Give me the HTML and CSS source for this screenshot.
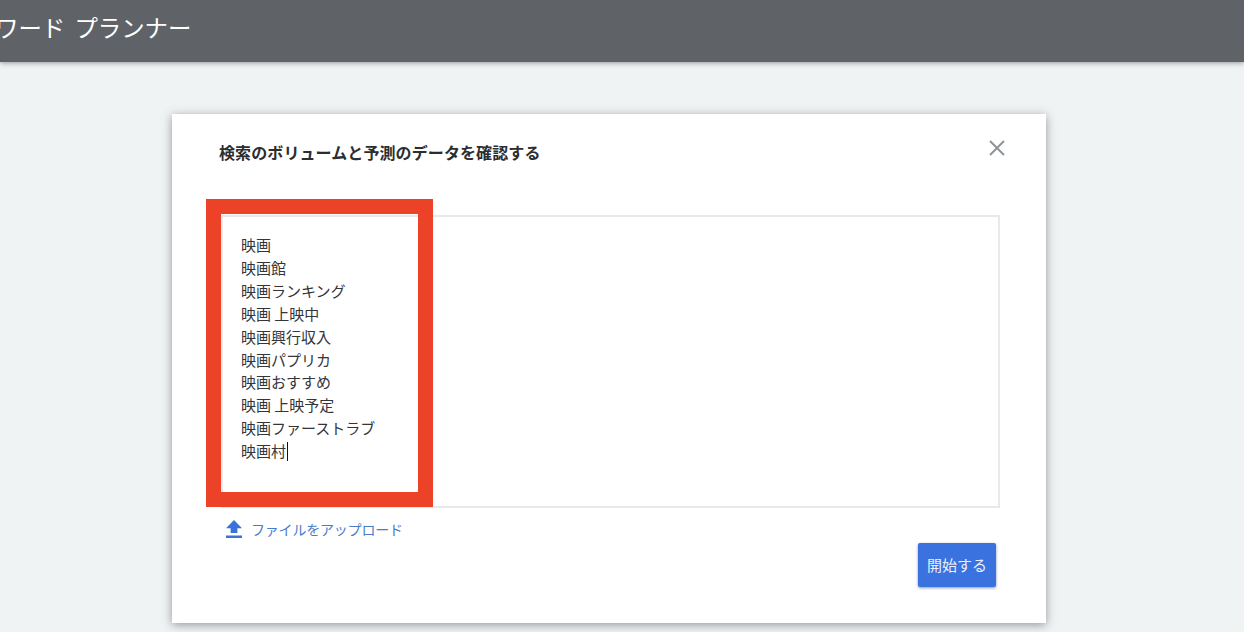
FILE: index.html
```html
<!DOCTYPE html>
<html lang="ja">
<head>
<meta charset="utf-8">
<title>キーワード プランナー</title>
<link rel="stylesheet" href="styles.css">
</head>
<body>
<header class="topbar"><h1 class="topbar-title">ワード プランナー</h1></header>
<main class="stage">
  <section class="dialog">
    <div class="dialog-head">
      <h2 class="dialog-title">検索のボリュームと予測のデータを確認する</h2>
      <button class="close" type="button" aria-label="閉じる">
        <svg width="16" height="16" viewBox="0 0 16 16"><path d="M1 1l14 14M15 1L1 15" fill="none" stroke="#8f9499" stroke-width="2"/></svg>
      </button>
    </div>
    <div class="field">
      <div class="keywords">
        <div>映画</div>
        <div>映画館</div>
        <div>映画ランキング</div>
        <div>映画 上映中</div>
        <div>映画興行収入</div>
        <div>映画パプリカ</div>
        <div>映画おすすめ</div>
        <div>映画 上映予定</div>
        <div>映画ファーストラブ</div>
        <div>映画村<span class="caret"></span></div>
      </div>
      <div class="highlight"></div>
    </div>
    <a class="upload" href="#">
      <svg width="16" height="18" viewBox="0 0 16 18"><path d="M8 0l8 8.200h-4.600V13H4.600V8.200H0z M0 15.600h16V18H0z" fill="#3a73d8"/></svg>
      <span>ファイルをアップロード</span>
    </a>
    <div class="actions"><button class="start" type="button">開始する</button></div>
  </section>
</main>
</body>
</html>
```
FILE: styles.css
```css
* { box-sizing: border-box; }
html, body { margin: 0; height: 632px; overflow: hidden; }
body {
  background: #f0f3f4;
  font-family: "Noto Sans CJK JP", "Liberation Sans", sans-serif;
  color: #2b2d30;
}
.topbar {
  height: 62px;
  background: #5f6368;
  box-shadow: 0 1px 5px rgba(60, 64, 67, .5);
  display: flex;
  align-items: center;
}
.topbar-title {
  margin: 0 0 8px -5px;
  font-size: 23.4px;
  font-weight: 400;
  line-height: 30px;
  word-spacing: 4px;
  color: #fff;
  white-space: nowrap;
}
.stage {
  padding: 52px 198px 0 172px;
}
.dialog {
  height: 509px;
  background: #fff;
  box-shadow: 0 2px 9px rgba(60, 64, 67, .5);
  padding: 0 46px 0 49px;
}
.dialog-head {
  height: 101px;
  display: flex;
  justify-content: space-between;
  align-items: flex-start;
}
.dialog-title {
  margin: 26px 0 0 -2px;
  font-size: 16px;
  font-weight: 700;
  line-height: 24px;
  letter-spacing: .1px;
  color: #2b2d30;
}
.close {
  margin: 26px -5px 0 0;
  padding: 0;
  border: 0;
  background: none;
  line-height: 0;
}
.field {
  position: relative;
  height: 293px;
  border: 2px solid #e7e9ea;
  padding: 17px 18px;
}
.keywords {
  font-size: 15px;
  line-height: 22.9px;
  color: #333538;
}
.caret {
  display: inline-block;
  width: 1px;
  height: 19px;
  margin-left: 1px;
  background: #111;
  vertical-align: -4px;
}
.highlight {
  position: absolute;
  left: -17px;
  top: -18px;
  width: 227px;
  height: 308px;
  border: 15px solid #ec4227;
}
.upload {
  display: flex;
  align-items: center;
  gap: 9px;
  margin: 11px 0 0 5px;
  height: 20px;
  font-size: 14px;
  letter-spacing: -.2px;
  color: #4a7bc8;
  text-decoration: none;
}
.actions {
  display: flex;
  justify-content: flex-end;
  margin: 4px 4px 0 0;
}
.start {
  width: 78px;
  height: 44px;
  padding: 0 0 2px;
  border: 0;
  border-radius: 2px;
  background: #3a73e0;
  color: #e9f0fc;
  font: inherit;
  font-size: 15px;
  box-shadow: 0 1px 3px rgba(40, 60, 110, .55);
}
```
